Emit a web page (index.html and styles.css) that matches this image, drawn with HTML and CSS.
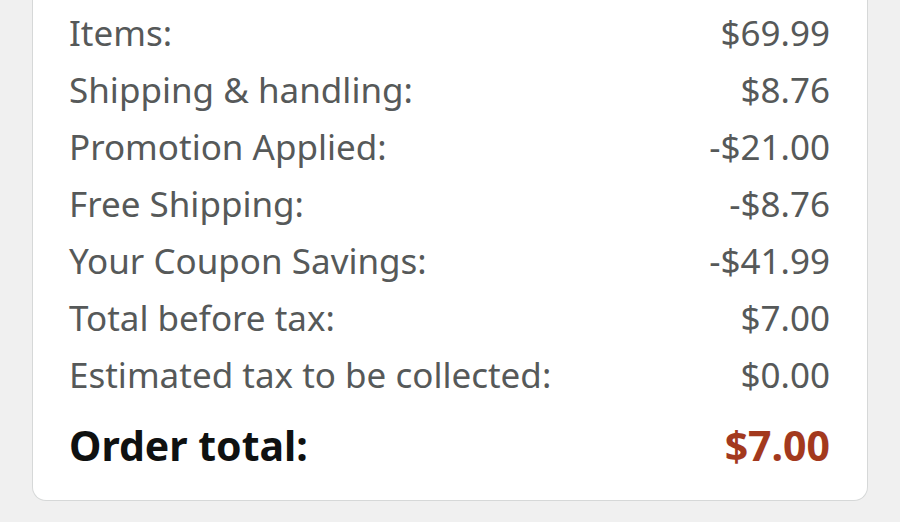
FILE: index.html
```html
<!DOCTYPE html>
<html>
<head>
<meta charset="utf-8">
<link rel="stylesheet" href="styles.css">
</head>
<body>
<div class="card">
  <div class="row"><span>Items:</span><span>$69.99</span></div>
  <div class="row"><span>Shipping &amp; handling:</span><span>$8.76</span></div>
  <div class="row"><span>Promotion Applied:</span><span>-$21.00</span></div>
  <div class="row"><span>Free Shipping:</span><span>-$8.76</span></div>
  <div class="row"><span>Your Coupon Savings:</span><span>-$41.99</span></div>
  <div class="row"><span>Total before tax:</span><span>$7.00</span></div>
  <div class="row"><span>Estimated tax to be collected:</span><span>$0.00</span></div>
  <div class="row total"><span>Order total:</span><span class="price">$7.00</span></div>
</div>
</body>
</html>
```
FILE: styles.css
```css
html, body {
  margin: 0;
  padding: 0;
  background: #f0f0f0;
}
body {
  padding: 0 32px;
  font-family: "Noto Sans", sans-serif;
}
.card {
  background: #ffffff;
  border: 1.5px solid #d6d8d8;
  border-top: none;
  border-radius: 0 0 14px 14px;
  padding: 4px 37px 27px 36px;
}
.row {
  display: flex;
  justify-content: space-between;
  align-items: center;
  height: 57px;
  font-size: 35px;
  color: #565959;
}
.row.total {
  margin-top: 13px;
  font-size: 41px;
  font-weight: 700;
  color: #0f1111;
}
.price {
  color: #a3391e;
}
```
